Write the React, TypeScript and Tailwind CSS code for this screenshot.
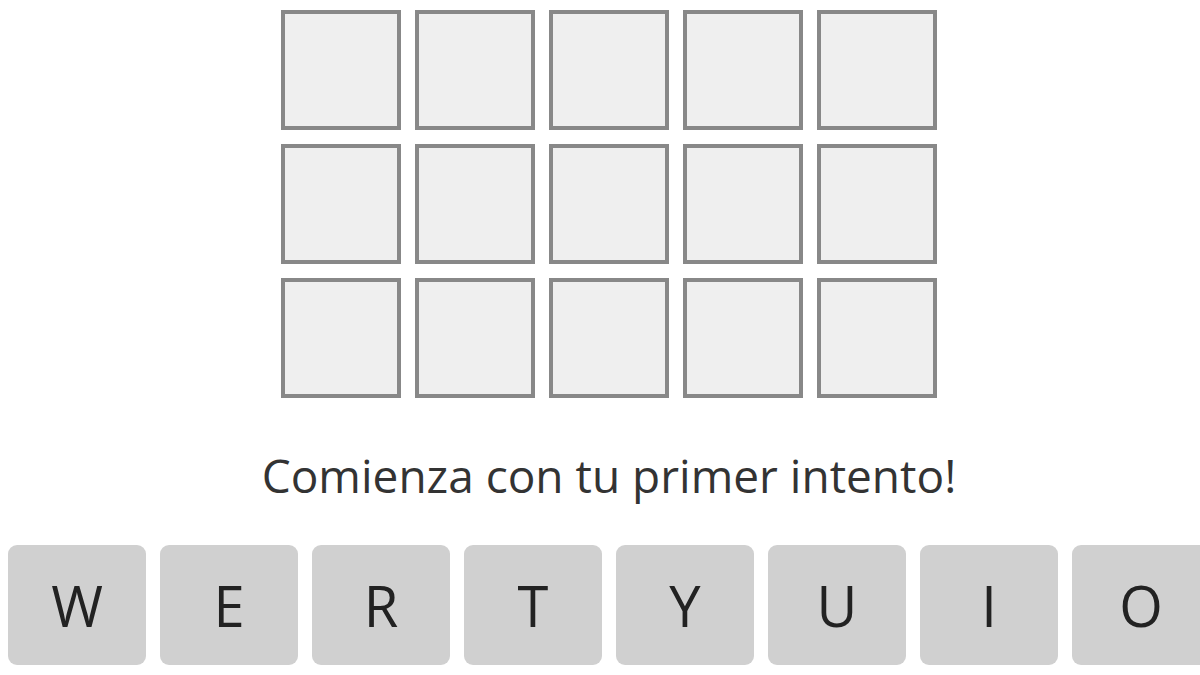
const rows = 3;
const cols = 5;
const keys = ["W", "E", "R", "T", "Y", "U", "I", "O"];

export default function App() {
  return (
    <div className="w-[1200px] h-[675px] overflow-hidden bg-white" style={{ fontFamily: '"Open Sans", "Noto Sans", sans-serif' }}>
      <div className="w-[1218px] flex flex-col items-center pt-[10px]">
        {/* Board */}
        <div className="grid grid-cols-5 gap-[14px]">
          {Array.from({ length: rows * cols }).map((_, i) => (
            <div key={i} className="w-[120px] h-[120px] bg-[#efefef] border-4 border-[#888888]" />
          ))}
        </div>

        {/* Message */}
        <p className="mt-[50px] text-[46px] leading-[54px] text-[#333333]">Comienza con tu primer intento!</p>

        {/* Keyboard */}
        <div className="mt-[43px] flex gap-[14px]">
          {keys.map((k) => (
            <button
              key={k}
              className="w-[138px] h-[120px] shrink-0 rounded-[9px] bg-[#d0d0d0] text-[56px] text-[#222222] flex items-center justify-center"
            >
              {k}
            </button>
          ))}
        </div>
      </div>
    </div>
  );
}
